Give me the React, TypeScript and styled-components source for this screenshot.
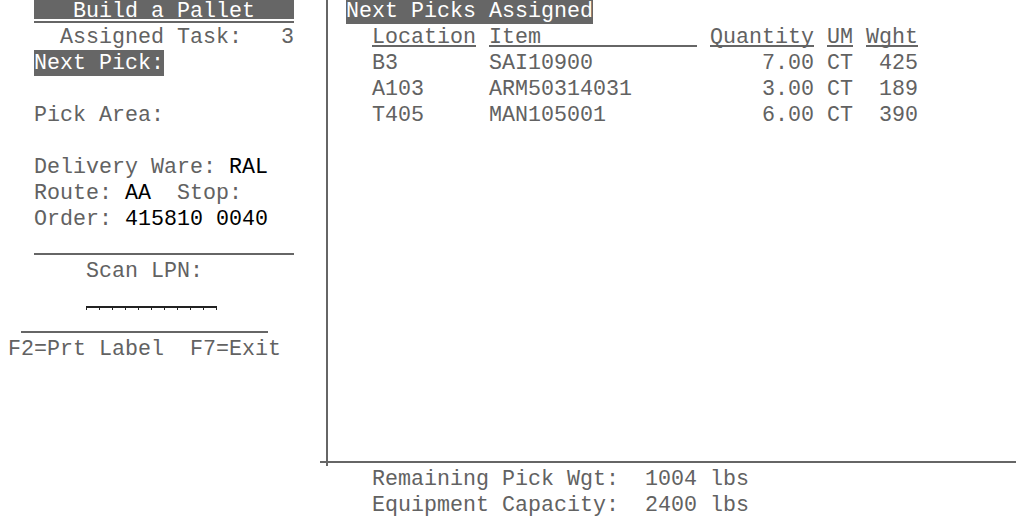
import * as React from 'react';
import styled, { createGlobalStyle } from 'styled-components';

const CH = 13;

const GlobalStyle = createGlobalStyle`
    html, body {
        margin: 0;
        padding: 0;
        background: #fff;
        overflow: hidden;
    }
    body {
        font-family: "Liberation Mono", "DejaVu Sans Mono", monospace;
        font-size: 21.66px;
        color: #626262;
    }
`;

const Screen = styled.div`
    width: 1016px;
    height: 522px;
    margin-top: -2px;
    display: flex;
    flex-direction: column;
`;

const Main = styled.div`
    display: flex;
    height: 468px;
`;

const LeftPanel = styled.div`
    width: 326px;
    box-sizing: border-box;
    padding-left: 8px;
    display: flex;
    flex-direction: column;
`;

const RightPanel = styled.div`
    flex: 1;
    border-left: 2px solid #666;
    padding-left: 18px;
    display: flex;
    flex-direction: column;
`;

// rows are 26px apart; the taller line box sets the text one pixel lower, as in the terminal
const Row = styled.div<{ $col?: number }>`
    height: 26px;
    line-height: 28px;
    padding-left: ${p => (p.$col || 0) * CH}px;
    white-space: pre;
    display: flex;
`;

const Value = styled.span`
    color: #000;
`;

const Reverse = styled.span`
    background: #666;
    color: #fff;
    height: 26px;
`;

const TitleBar = styled.div<{ $cols: number }>`
    width: ${p => p.$cols * CH}px;
    height: 21px;
    padding-bottom: 2px;
    border-bottom: 2px solid #666;
    background: #666;
    background-clip: content-box;
    color: #fff;
    text-align: center;
    line-height: 28px;
    margin-bottom: 1px;
    white-space: pre;
`;

const Rule = styled.div<{ $col: number; $cols: number }>`
    margin-left: ${p => p.$col * CH}px;
    width: ${p => p.$cols * CH}px;
    height: 21px;
    border-bottom: 2px solid #666;
    margin-bottom: 3px;
`;

const InputField = styled.div<{ $cols: number }>`
    width: ${p => p.$cols * CH + 1}px;
    height: 4px;
    margin-top: 22px;
    border-top: 2px solid #222;
    box-sizing: border-box;
    background: repeating-linear-gradient(to right, #222 0 1px, transparent 1px ${CH}px);
`;

const BottomRule = styled.div`
    margin-top: auto;
    margin-left: -26px;
    height: 21px;
    border-bottom: 2px solid #666;
    margin-bottom: 3px;
`;

const PickGrid = styled.div`
    display: grid;
    grid-template-columns: ${8 * CH}px ${16 * CH}px ${8 * CH}px ${2 * CH}px ${4 * CH}px;
    column-gap: ${CH}px;
    padding-left: ${2 * CH}px;
    line-height: 28px;
    white-space: pre;
`;

const HeadCell = styled.div`
    height: 21px;
    border-bottom: 2px solid #666;
    margin-bottom: 3px;
`;

const Cell = styled.div<{ $right?: boolean }>`
    height: 26px;
    text-align: ${p => (p.$right ? 'right' : 'left')};
`;

const Footer = styled.div`
    padding-left: 372px;
`;

type Pick = { location: string; item: string; qty: string; um: string; wght: string };

const picks: Pick[] = [
    { location: 'B3', item: 'SAI10900', qty: '7.00', um: 'CT', wght: '425' },
    { location: 'A103', item: 'ARM50314031', qty: '3.00', um: 'CT', wght: '189' },
    { location: 'T405', item: 'MAN105001', qty: '6.00', um: 'CT', wght: '390' },
];

const App: React.FC = () => (
    <>
        <GlobalStyle />
        <Screen>
            <Main>
                <LeftPanel>
                    <Row $col={2}>
                        <TitleBar $cols={20}>Build a Pallet</TitleBar>
                    </Row>
                    <Row $col={4}>Assigned Task:   3</Row>
                    <Row $col={2}><Reverse>Next Pick:</Reverse></Row>
                    <Row />
                    <Row $col={2}>Pick Area:</Row>
                    <Row />
                    <Row $col={2}>Delivery Ware: <Value>RAL</Value></Row>
                    <Row $col={2}>Route: <Value>AA</Value>  Stop:</Row>
                    <Row $col={2}>Order: <Value>415810 0040</Value></Row>
                    <Rule $col={2} $cols={20} />
                    <Row $col={6}>Scan LPN:</Row>
                    <Row $col={6}><InputField $cols={10} /></Row>
                    <Rule $col={1} $cols={19} />
                    <Row>F2=Prt Label  F7=Exit</Row>
                </LeftPanel>
                <RightPanel>
                    <Row><Reverse>Next Picks Assigned</Reverse></Row>
                    <PickGrid>
                        <HeadCell>Location</HeadCell>
                        <HeadCell>Item</HeadCell>
                        <HeadCell>Quantity</HeadCell>
                        <HeadCell>UM</HeadCell>
                        <HeadCell>Wght</HeadCell>
                        {picks.map(p => (
                            <React.Fragment key={p.location}>
                                <Cell>{p.location}</Cell>
                                <Cell>{p.item}</Cell>
                                <Cell $right>{p.qty}</Cell>
                                <Cell>{p.um}</Cell>
                                <Cell $right>{p.wght}</Cell>
                            </React.Fragment>
                        ))}
                    </PickGrid>
                    <BottomRule />
                </RightPanel>
            </Main>
            <Footer>
                <Row>Remaining Pick Wgt:  1004 lbs</Row>
                <Row>Equipment Capacity:  2400 lbs</Row>
            </Footer>
        </Screen>
    </>
);

export default App;
